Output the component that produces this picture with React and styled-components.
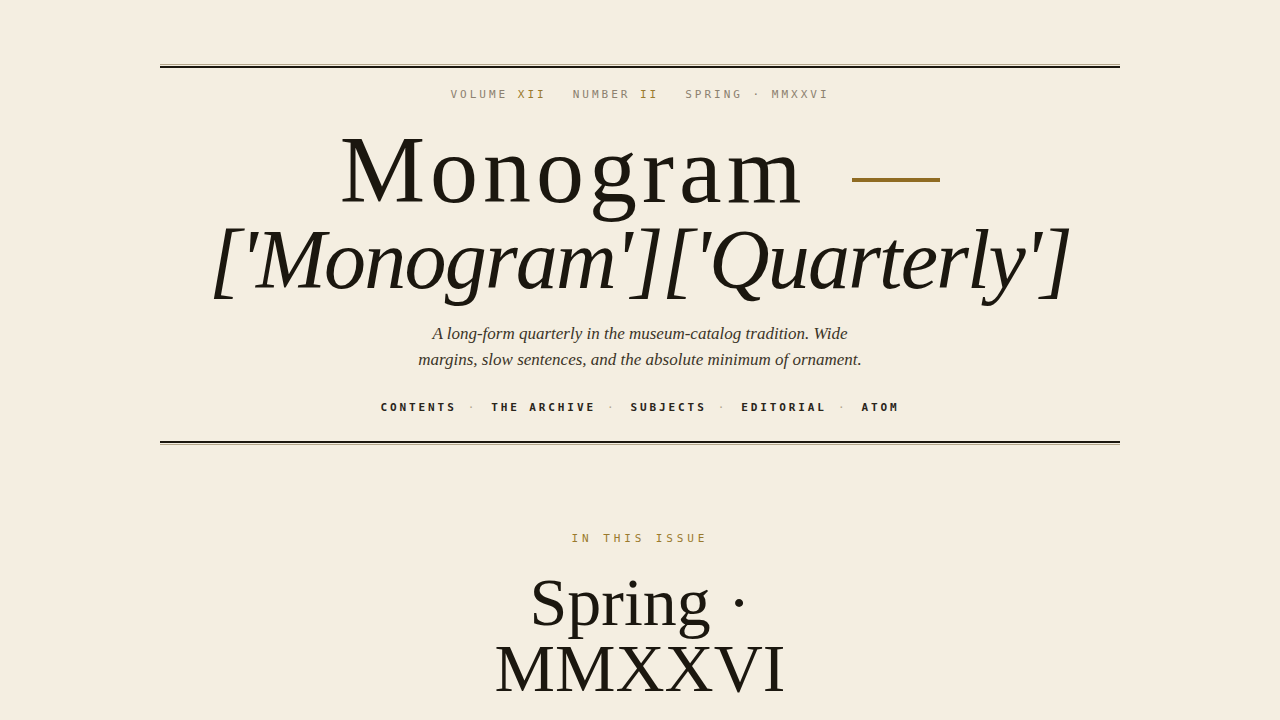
import React from "react";
import styled, { createGlobalStyle } from "styled-components";

const Global = createGlobalStyle`
  html, body { margin: 0; padding: 0; background: #f4eee1; }
  body { font-family: "Liberation Serif", serif; color: #1b170f; }
`;

const Page = styled.div`
  padding-top: 64px;
  display: flex;
  flex-direction: column;
  align-items: center;
`;

const Masthead = styled.header`
  width: 960px;
  display: flex;
  flex-direction: column;
  align-items: center;
`;

const Rule = styled.div`
  width: 100%;
  height: 1px;
  border-top: ${(p) => (p.$flip ? "2px solid #1b170f" : "1px solid #b3a68b")};
  border-bottom: ${(p) => (p.$flip ? "1px solid #b3a68b" : "2px solid #1b170f")};
`;

const Meta = styled.div`
  margin-top: 19px;
  display: flex;
  gap: 26px;
  font-family: "DejaVu Sans Mono", monospace;
  font-size: 11px;
  line-height: 16px;
  letter-spacing: 3px;
  color: #8c8170;
  text-transform: uppercase;
`;

const Num = styled.span`
  color: #9a7a2d;
`;

const Title = styled.h1`
  margin: 17px 0 0;
  font-weight: normal;
  text-align: center;
  display: flex;
  flex-direction: column;
  align-items: center;
`;

const TitleMain = styled.span`
  display: block;
  font-size: 96px;
  line-height: 100px;
  letter-spacing: 5px;
  white-space: nowrap;
`;

const Dash = styled.span`
  display: inline-block;
  width: 88px;
  height: 4px;
  background: #8f6b22;
  margin-left: 46px;
  vertical-align: 20px;
`;

const TitleSub = styled.span`
  display: block;
  font-style: italic;
  font-size: 84px;
  line-height: 80px;
  letter-spacing: -1.8px;
  white-space: nowrap;
`;

const Lede = styled.p`
  margin: 21px 0 0;
  font-style: italic;
  font-size: 17px;
  line-height: 26px;
  color: #3b3427;
  text-align: center;
`;

const Nav = styled.nav`
  margin: 27px 0 25px;
  display: flex;
  align-items: center;
  font-family: "DejaVu Sans Mono", monospace;
  font-size: 11px;
  font-weight: bold;
  line-height: 16px;
  letter-spacing: 2.9px;
  color: #2a251b;
`;

const NavLink = styled.a`
  color: inherit;
  text-decoration: none;
`;

const Sep = styled.span`
  color: #b3a68b;
  font-weight: normal;
  margin: 0 14px 0 11px;
`;

const Issue = styled.section`
  margin-top: 86px;
  display: flex;
  flex-direction: column;
  align-items: center;
`;

const Kicker = styled.div`
  font-family: "DejaVu Sans Mono", monospace;
  font-size: 11px;
  line-height: 16px;
  letter-spacing: 3.9px;
  color: #9a7a2d;
`;

const IssueTitle = styled.h2`
  margin: 22px 0 0;
  max-width: 320px;
  font-weight: normal;
  font-size: 68px;
  line-height: 66px;
  text-align: center;
`;

const navItems = ["Contents", "The Archive", "Subjects", "Editorial", "Atom"];

export default function App() {
  return (
    <>
      <Global />
      <Page>
        <Masthead>
          <Rule />
          <Meta>
            <span>
              Volume <Num>XII</Num>
            </span>
            <span>
              Number <Num>II</Num>
            </span>
            <span>Spring · MMXXVI</span>
          </Meta>
          <Title>
            <TitleMain>
              Monogram
              <Dash />
            </TitleMain>
            <TitleSub>['Monogram']['Quarterly']</TitleSub>
          </Title>
          <Lede>
            A long-form quarterly in the museum-catalog tradition. Wide
            <br />
            margins, slow sentences, and the absolute minimum of ornament.
          </Lede>
          <Nav>
            {navItems.map((item, i) => (
              <React.Fragment key={item}>
                {i > 0 && <Sep>·</Sep>}
                <NavLink href="#">{item.toUpperCase()}</NavLink>
              </React.Fragment>
            ))}
          </Nav>
          <Rule $flip />
        </Masthead>
        <Issue>
          <Kicker>IN THIS ISSUE</Kicker>
          <IssueTitle>Spring · MMXXVI</IssueTitle>
        </Issue>
      </Page>
    </>
  );
}
